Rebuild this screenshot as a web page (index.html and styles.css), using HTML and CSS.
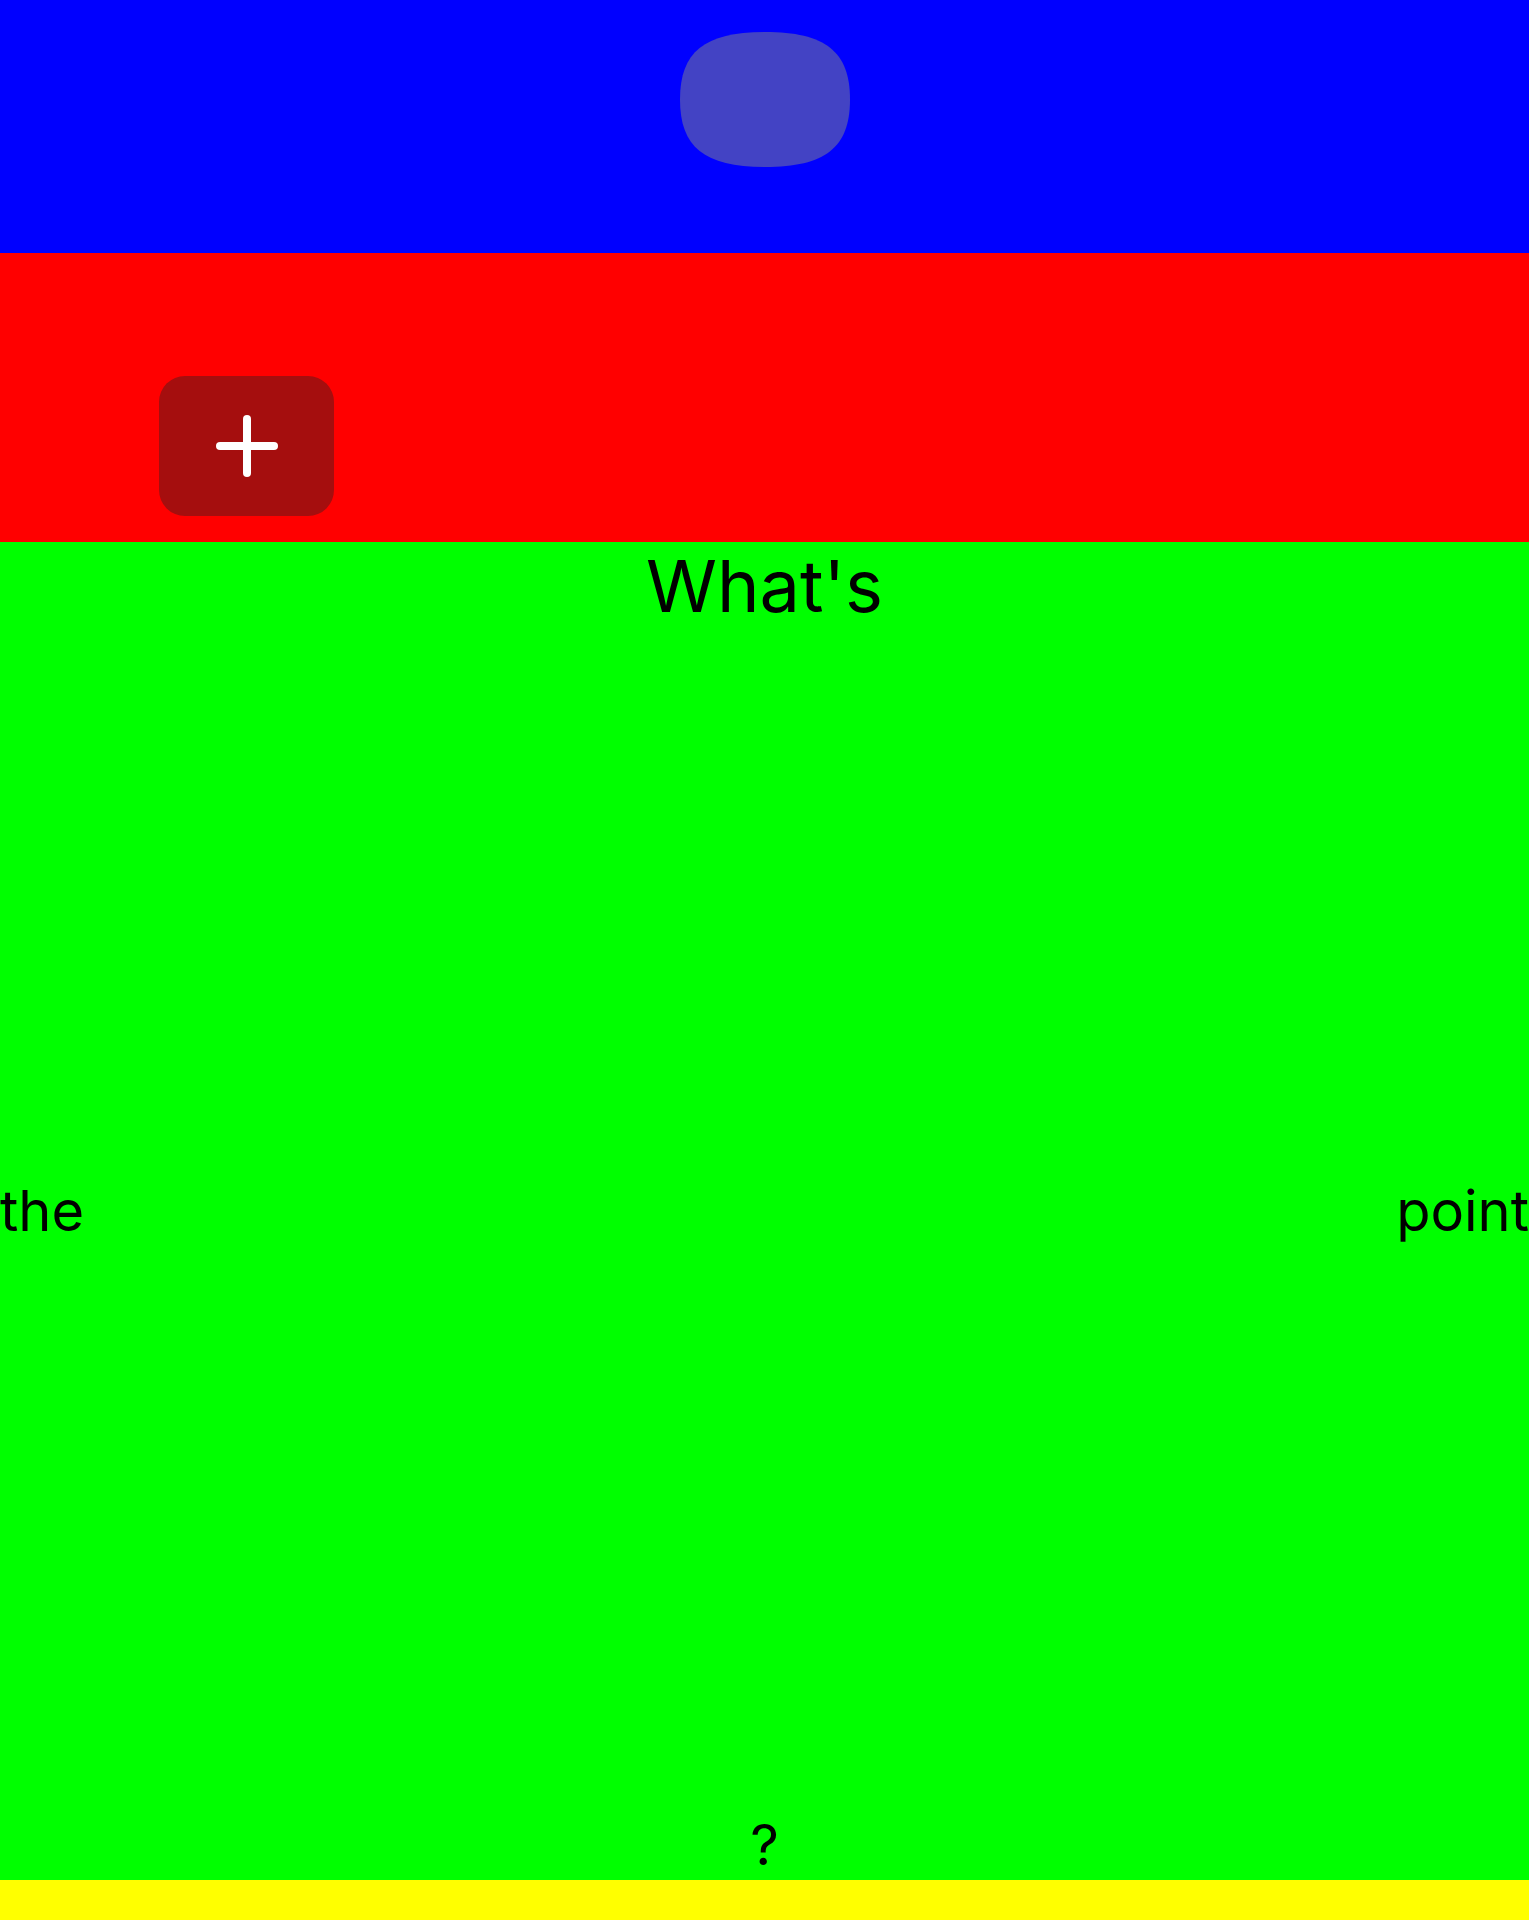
FILE: index.html
```html
<!DOCTYPE html>
<html lang="en">
<head>
<meta charset="utf-8">
<title>What's the point?</title>
<link rel="stylesheet" href="styles.css">
</head>
<body>
<div class="app">
  <header class="top">
    <svg class="pill" width="170" height="135" viewBox="0 0 170 135" aria-hidden="true">
      <path d="M170 67.5 C170 19.6 145.35 0 85 0 C24.65 0 0 19.6 0 67.5 C0 115.4 24.65 135 85 135 C145.35 135 170 115.4 170 67.5 Z" fill="#4343c4"/>
    </svg>
  </header>
  <section class="bar">
    <button class="add" type="button" aria-label="Add">
      <svg width="64" height="64" viewBox="0 0 64 64">
        <line x1="32" y1="5" x2="32" y2="59" stroke="#fff" stroke-width="8" stroke-linecap="round"/>
        <line x1="5" y1="32" x2="59" y2="32" stroke="#fff" stroke-width="8" stroke-linecap="round"/>
      </svg>
    </button>
  </section>
  <main class="main">
    <span class="word word-top">What's</span>
    <span class="word word-left">the</span>
    <span class="word word-right">point</span>
    <span class="word word-bottom">?</span>
  </main>
  <footer class="foot"></footer>
</div>
</body>
</html>
```
FILE: styles.css
```css
html, body {
  margin: 0;
  padding: 0;
  background: #ffffff;
}
body {
  font-family: Inter, "Liberation Sans", Arial, sans-serif;
  color: #000;
}
.app {
  width: 1529px;
  display: flex;
  flex-direction: column;
}
.top {
  height: 253px;
  background: #0000ff;
  display: flex;
  justify-content: center;
  align-items: flex-start;
  padding-top: 32px;
  box-sizing: border-box;
}
.pill {
  display: block;
  width: 170px;
  height: 135px;
}
.bar {
  height: 289px;
  background: #ff0000;
  box-sizing: border-box;
  padding: 123px 0 0 159px;
  display: flex;
  align-items: flex-start;
}
.add {
  width: 175px;
  height: 140px;
  border: 0;
  padding: 0;
  border-radius: 26px;
  background: #a50e0e;
  display: flex;
  align-items: center;
  justify-content: center;
}
.main {
  height: 1338px;
  background: #00ff00;
  display: grid;
  grid-template-columns: 1fr;
  grid-template-rows: 1fr;
}
.word {
  grid-area: 1 / 1;
  font-size: 56px;
  line-height: normal;
}
.word-top {
  font-size: 72px;
  justify-self: center;
  align-self: start;
}
.word-left {
  justify-self: start;
  align-self: center;
}
.word-right {
  justify-self: end;
  align-self: center;
}
.word-bottom {
  justify-self: center;
  align-self: end;
  margin-bottom: 1px;
}
.foot {
  height: 40px;
  background: #ffff00;
}
```
